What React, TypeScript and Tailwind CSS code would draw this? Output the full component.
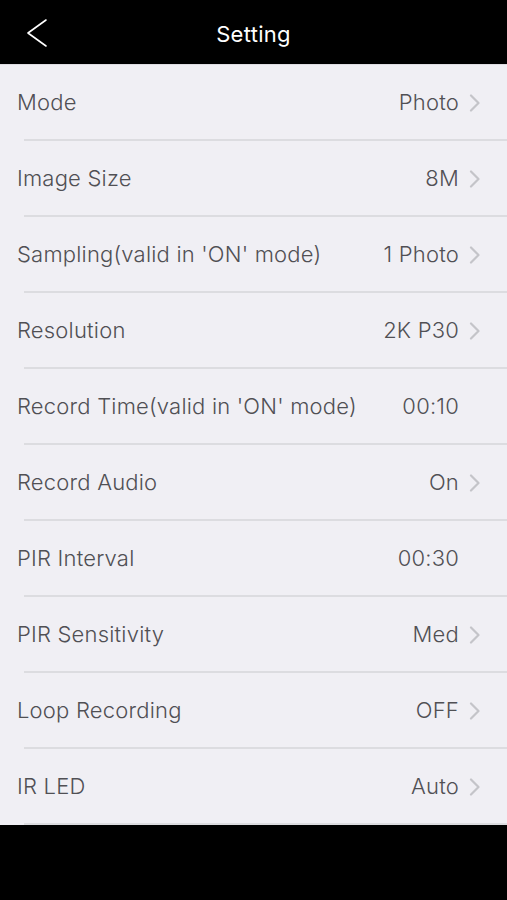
import React from "react";

type Row = { label: string; value: string; chevron: boolean };

const rows: Row[] = [
  { label: "Mode", value: "Photo", chevron: true },
  { label: "Image Size", value: "8M", chevron: true },
  { label: "Sampling(valid in 'ON' mode)", value: "1 Photo", chevron: true },
  { label: "Resolution", value: "2K P30", chevron: true },
  { label: "Record Time(valid in 'ON' mode)", value: "00:10", chevron: false },
  { label: "Record Audio", value: "On", chevron: true },
  { label: "PIR Interval", value: "00:30", chevron: false },
  { label: "PIR Sensitivity", value: "Med", chevron: true },
  { label: "Loop Recording", value: "OFF", chevron: true },
  { label: "IR LED", value: "Auto", chevron: true },
];

function Chevron({ show }: { show: boolean }) {
  return (
    <div className="w-[14px] h-[18px] ml-[9px] flex items-center justify-center">
      {show && (
        <svg width="14" height="18" viewBox="0 0 14 18" fill="none">
          <path d="M3 1.5 L10.5 9 L3 16.5" stroke="#c4c4c9" strokeWidth="2.2" strokeLinecap="round" strokeLinejoin="round" />
        </svg>
      )}
    </div>
  );
}

export default function App() {
  return (
    <div
      className="w-[507px] h-[900px] bg-black flex flex-col"
      style={{ fontFamily: "Inter, 'Liberation Sans', Arial, sans-serif" }}
    >
      <div className="h-[64px] relative flex items-center justify-center shrink-0">
        <svg className="absolute left-[24px] top-[17px]" width="26" height="32" viewBox="0 0 26 32" fill="none">
          <path d="M22 3 L4 16 L22 29" stroke="#ffffff" strokeWidth="1.6" strokeLinecap="round" strokeLinejoin="round" />
        </svg>
        <span className="text-white text-[22px] tracking-[0.3px] mt-[5px]">Setting</span>
      </div>
      <div className="bg-[#f0eff4] border-t border-[#dedde2]">
        {rows.map((r) => (
          <div key={r.label} className="h-[76px] flex flex-col">
            <div className="flex-1 flex items-center pl-[17px] pr-[25px] pt-[1px]">
              <span className="flex-1 text-[22px] tracking-[0.2px] font-light text-[#505054] whitespace-nowrap">{r.label}</span>
              <span className="text-[22px] tracking-[0.2px] font-light text-[#505054] whitespace-nowrap">{r.value}</span>
              <Chevron show={r.chevron} />
            </div>
            <div className="ml-[24px] h-[2px] bg-[#dcdce0]" />
          </div>
        ))}
      </div>
    </div>
  );
}
